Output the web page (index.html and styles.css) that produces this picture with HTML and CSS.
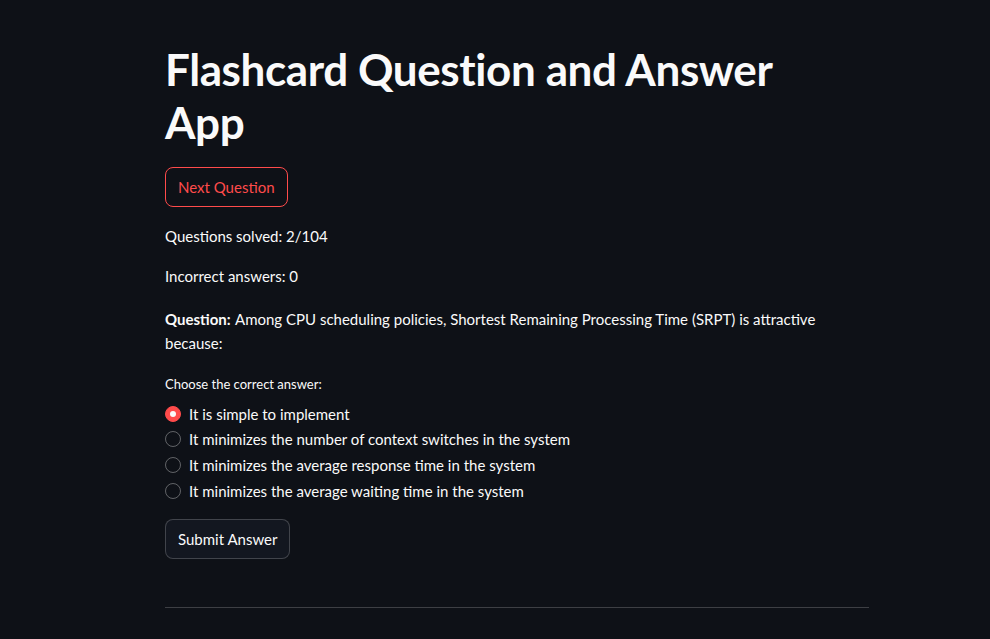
FILE: index.html
```html
<!DOCTYPE html>
<html>
<head>
<meta charset="utf-8">
<link rel="stylesheet" href="styles.css">
</head>
<body>
<main class="app">
  <div class="block">
    <h1 class="title">Flashcard Question and Answer App</h1>
    <button class="btn btn-next">Next Question</button>
    <p class="text t-solved">Questions solved: 2/104</p>
    <p class="text t-incorrect">Incorrect answers: 0</p>
    <p class="text t-question"><strong>Question:</strong> Among CPU scheduling policies, Shortest Remaining Processing Time (SRPT) is attractive because:</p>
    <div class="radio-label">Choose the correct answer:</div>
    <div class="radio-group">
      <label class="radio"><span class="dot checked"></span><span>It is simple to implement</span></label>
      <label class="radio"><span class="dot"></span><span>It minimizes the number of context switches in the system</span></label>
      <label class="radio"><span class="dot"></span><span>It minimizes the average response time in the system</span></label>
      <label class="radio"><span class="dot"></span><span>It minimizes the average waiting time in the system</span></label>
    </div>
    <button class="btn btn-submit">Submit Answer</button>
    <hr class="divider">
  </div>
</main>
</body>
</html>
```

FILE: styles.css
```css
html, body {
  margin: 0;
  padding: 0;
  background: #0e1117;
  color: #fafafa;
  font-family: "Lato", "Noto Sans", sans-serif;
  height: 100%;
  overflow: hidden;
}
.app {
  display: flex;
  justify-content: center;
}
.block {
  width: 704px;
  margin-left: 44px;
  padding-top: 43px;
  display: flex;
  flex-direction: column;
  align-items: flex-start;
}
.title {
  margin: 0;
  font-size: 44px;
  font-weight: 700;
  line-height: 53px;
  letter-spacing: -0.4px;
  width: 640px;
}
.btn {
  font-family: inherit;
  font-size: 15px;
  line-height: 24px;
  padding: 7px 12px;
  border-radius: 8px;
  background: #0e1117;
  cursor: pointer;
}
.btn-next {
  margin-top: 18px;
  color: #ff4b4b;
  border: 1px solid #ff4b4b;
}
.btn-submit {
  margin-top: 15px;
  color: #fafafa;
  border: 1px solid rgba(250, 250, 250, 0.2);
  background: #131720;
}
.text {
  margin: 0;
  font-size: 15px;
  line-height: 24px;
}
.t-solved { margin-top: 17px; }
.t-incorrect { margin-top: 16px; }
.t-question { margin-top: 19px; width: 680px; }
.t-question strong { font-weight: 700; margin-right: 1px; }
.radio-label {
  margin-top: 19px;
  font-size: 13px;
  line-height: 21px;
}
.radio-group {
  margin-top: 6px;
  display: flex;
  flex-direction: column;
}
.radio {
  display: flex;
  align-items: center;
  height: 25.67px;
  font-size: 15px;
  gap: 8px;
}
.dot {
  box-sizing: border-box;
  width: 16px;
  height: 16px;
  border-radius: 50%;
  border: 1px solid rgba(250, 250, 250, 0.35);
  display: inline-block;
  position: relative;
}
.dot.checked {
  background: #ff4b4b;
  border-color: #ff4b4b;
}
.dot.checked::after {
  content: "";
  position: absolute;
  left: 50%;
  top: 50%;
  width: 6px;
  height: 6px;
  margin: -3px 0 0 -3px;
  border-radius: 50%;
  background: #fafafa;
}
.divider {
  align-self: stretch;
  margin: 48px 0 0;
  border: none;
  height: 1px;
  background: rgba(250, 250, 250, 0.2);
}
```
